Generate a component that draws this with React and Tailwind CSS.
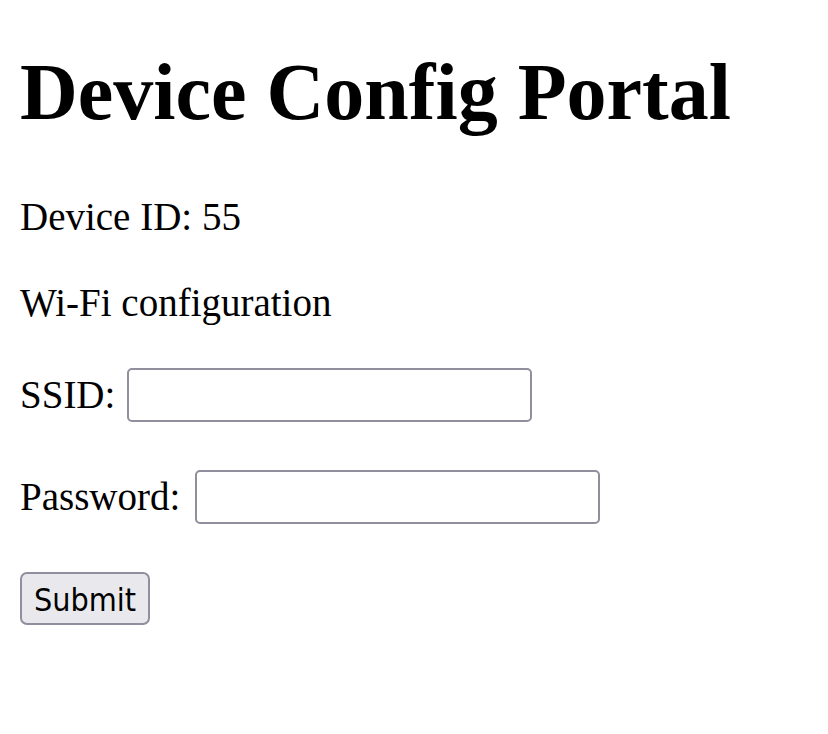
import React from 'react';

const serif = { fontFamily: '"Liberation Serif", "Times New Roman", serif' };

const Field = ({ label, labelWidth, className }) => (
    <div className={`flex items-center h-[54px] ${className}`}>
        <label className={`${labelWidth} shrink-0 text-[39px] leading-[46px] text-black`}>{label}</label>
        <input
            type="text"
            className="w-[405px] h-[54px] border-[2.5px] border-[#8f8f9d] rounded-[5px] bg-white outline-none"
        />
    </div>
);

export default function App() {
    return (
        <div className="min-h-screen bg-white px-[20px] text-black" style={serif}>
            <h1 className="pt-[46px] text-[80px] leading-[92px] font-bold">Device Config Portal</h1>

            <p className="mt-[56px] text-[39px] leading-[46px]">Device ID: 55</p>
            <p className="mt-[40px] text-[39px] leading-[46px]">Wi-Fi configuration</p>

            <form onSubmit={(e) => e.preventDefault()}>
                <Field label="SSID:" labelWidth="w-[107px]" className="mt-[42px]" />
                <Field label="Password:" labelWidth="w-[175px]" className="mt-[48px]" />

                <button
                    type="submit"
                    className="mt-[48px] w-[130px] h-[53px] flex items-center justify-center pt-[3px] bg-[#e9e9ed] border-[2.5px] border-[#8f8f9d] rounded-[7px] text-[32px] text-black"
                    style={{ fontFamily: '"DejaVu Sans Condensed", "DejaVu Sans", sans-serif' }}
                >
                    Submit
                </button>
            </form>
        </div>
    );
}
